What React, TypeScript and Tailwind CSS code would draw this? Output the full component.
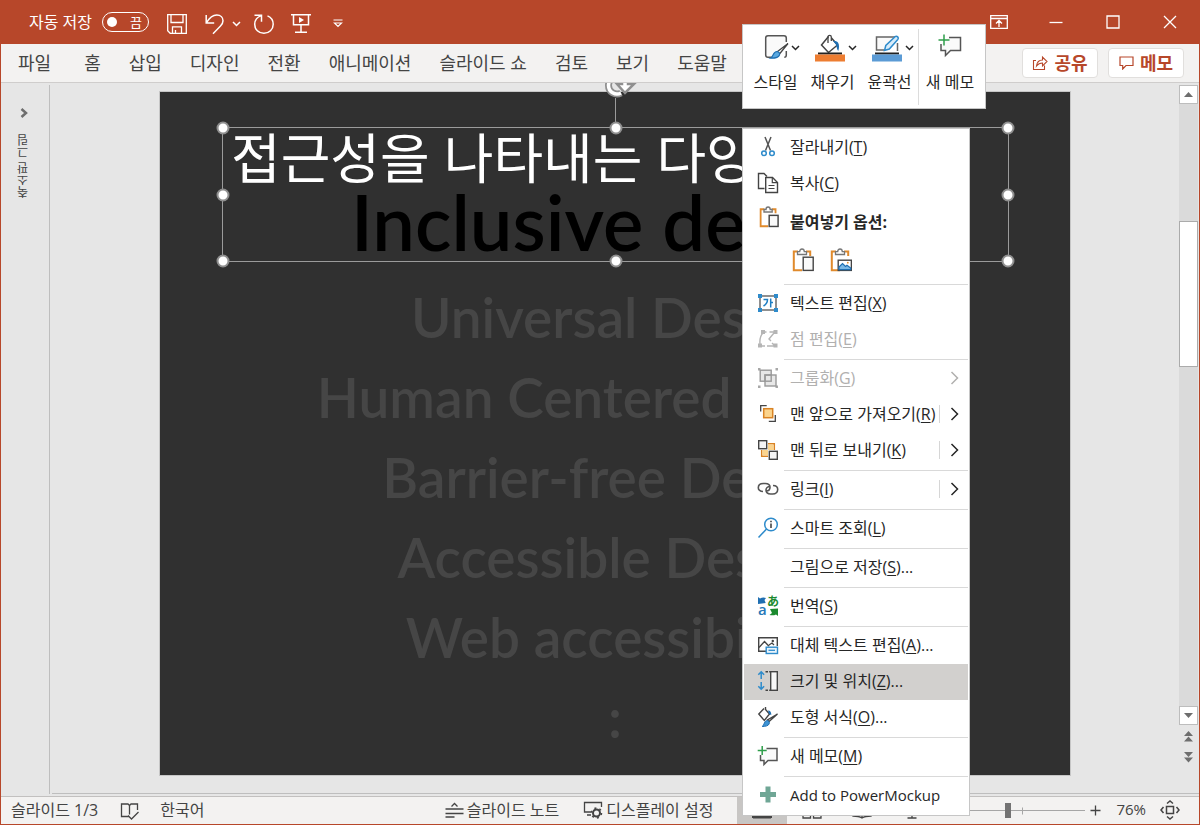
import React from "react";

type IconProps = { className?: string };

const Svg = ({
  w,
  h,
  children,
  className = "",
}: {
  w: number;
  h: number;
  children: React.ReactNode;
  className?: string;
}) => (
  <svg
    width={w}
    height={h}
    viewBox={`0 0 ${w} ${h}`}
    fill="none"
    stroke="currentColor"
    strokeWidth="1.3"
    className={`shrink-0 ${className}`}
    aria-hidden="true"
  >
    {children}
  </svg>
);

const ChevronDown = ({ className }: IconProps) => (
  <Svg w={9} h={6} className={className}>
    <path d="M1 1l3.5 3.5L8 1" strokeWidth="1.5" />
  </Svg>
);

/* ---------- title bar icons ---------- */

const SaveIcon = () => (
  <Svg w={22} h={22}>
    <path d="M1.7 1.7h18.6v18.6H4.2l-2.5-2.5z" />
    <path d="M5 2v7.500h12V2M6.500 20v-6.200h9V20M9.500 20v-3" />
  </Svg>
);

const UndoIcon = () => (
  <Svg w={22} h={22}>
    <path d="M2.200 2v8h8M2.500 9.700C5 5.500 8.500 2 12.800 2c4 0 6.200 2.700 6.200 5.800 0 2.200-1 3.700-2.500 5.200L9 20.700" strokeWidth="1.5" />
  </Svg>
);

const RedoIcon = () => (
  <Svg w={22} h={22}>
    <path d="M1.500 2.200h7v6.500M8.300 2.600C4.500 4 1.700 7 1.700 11.300c0 5.200 4 9 9.200 9s9.300-3.800 9.300-9c0-3.800-2.200-7-5.700-8.400" strokeWidth="1.5" />
  </Svg>
);

const PresentIcon = () => (
  <Svg w={20} h={21}>
    <path d="M0 1.700h20M2.500 2v9.800h15V2M10 12v7M4 19.300h12" strokeWidth="1.5" />
    <path d="M8 4l5 3-5 3z" fill="currentColor" stroke="none" />
  </Svg>
);

const CustomizeIcon = () => (
  <Svg w={10} h={9}>
    <path d="M0.500 1h9M1.500 4l3.500 3.500L8.500 4z" strokeWidth="1.2" />
  </Svg>
);

/* ---------- context menu icons ---------- */

const CutIcon = () => (
  <Svg w={22} h={22}>
    <path d="M8 1l5.500 13.500M14 1L8.500 14.500" stroke="#555" strokeWidth="1.500" />
    <circle cx="7" cy="17.300" r="2.300" stroke="#2e8bcb" strokeWidth="1.500" />
    <circle cx="15" cy="17.300" r="2.300" stroke="#2e8bcb" strokeWidth="1.500" />
  </Svg>
);

const CopyIcon = () => (
  <Svg w={22} h={22}>
    <path d="M7.500 16.500h-6v-15H7l3 3" stroke="#444" strokeWidth="1.400" />
    <path d="M8.700 5.500h6.800l5 5v10H8.700z" fill="#fff" stroke="#444" strokeWidth="1.400" />
    <path d="M15.300 5.500v5.200h5.200M11.500 13.500h6M11.500 16.500h6" stroke="#444" strokeWidth="1.200" />
  </Svg>
);

const PasteIcon = ({ picture = false }: { picture?: boolean }) => (
  <Svg w={22} h={24}>
    <path d="M6 3.500H1.800v18.700H10M14 3.500h4.200V8" stroke="#e08a2c" strokeWidth="2" />
    <path d="M5.500 6.500V3.700h2.200C7.700 2 8.600 1 10 1s2.300 1 2.300 2.700h2.200v2.800z" fill="#fff" stroke="#777" strokeWidth="1.300" />
    {picture ? (
      <>
        <rect x="8.200" y="12.200" width="13.200" height="10.200" fill="#fff" stroke="#444" strokeWidth="1.400" />
        <path d="M9 19l3.500-3.500 3 3 1.500-1.300L20.700 20v1.700H9z" fill="#7ab8e6" stroke="#1f6fb2" strokeWidth="1.200" />
        <circle cx="17.800" cy="14.700" r="0.900" fill="#e08a2c" stroke="none" />
      </>
    ) : (
      <rect x="11.200" y="9.200" width="10" height="13.200" fill="#fafafa" stroke="#444" strokeWidth="1.400" />
    )}
  </Svg>
);

const TextEditIcon = () => (
  <Svg w={22} h={22}>
    <rect x="3" y="4" width="16" height="14" stroke="#555" strokeWidth="1.300" />
    <g fill="#2e8bcb" stroke="none">
      <rect x="1" y="2" width="4" height="4" />
      <rect x="17" y="2" width="4" height="4" />
      <rect x="1" y="16" width="4" height="4" />
      <rect x="17" y="16" width="4" height="4" />
    </g>
    <path d="M6.500 7.500h4c0 3-1.500 5-4 6.500M13.700 6.500v9M13.700 10.500h2.300" stroke="#1f7fc4" strokeWidth="1.500" />
  </Svg>
);

const PointEditIcon = () => (
  <Svg w={22} h={22}>
    <path d="M7 4h2.500M12.500 4h5M17 5l-5 6 2 2M15 15l2.500 2.500M3 16C2.500 11 3.500 7.500 6 5M5 18h3M10 18h7" stroke="#b5b5b5" strokeWidth="1.400" />
    <g fill="#b5b5b5" stroke="none">
      <rect x="4" y="2" width="4" height="4" />
      <rect x="16.500" y="2" width="4" height="4" />
      <rect x="1" y="15.500" width="4" height="4" />
      <rect x="16.500" y="15.500" width="4" height="4" />
    </g>
  </Svg>
);

const GroupIcon = () => (
  <Svg w={22} h={22}>
    <g fill="#a8a8a8" stroke="none">
      <rect x="1" y="1" width="2.500" height="2.500" />
      <rect x="18.500" y="1" width="2.500" height="2.500" />
      <rect x="1" y="18.500" width="2.500" height="2.500" />
      <rect x="18.500" y="18.500" width="2.500" height="2.500" />
    </g>
    <rect x="3.200" y="3.200" width="11" height="11" fill="#e8e8e8" stroke="#999" strokeWidth="1.400" />
    <rect x="8" y="8" width="11" height="11" fill="#e8e8e8" stroke="#999" strokeWidth="1.400" />
    <rect x="8" y="8" width="6.200" height="6.200" stroke="#999" strokeWidth="1.400" />
  </Svg>
);

const BringFrontIcon = () => (
  <Svg w={22} h={22}>
    <rect x="6.700" y="5.700" width="9" height="9" fill="#fbd48d" stroke="#d98324" strokeWidth="1.500" />
    <path d="M3.700 8.500V2.700h6M18.300 12v6.300h-6.500" stroke="#444" strokeWidth="1.300" />
  </Svg>
);

const SendBackIcon = () => (
  <Svg w={22} h={22}>
    <path d="M11 4.700h6.300V11M4.700 11v6.300H11" stroke="#d98324" strokeWidth="1.500" />
    <path d="M11 5.500h5.500V11H11zM5.500 11H11v5.500H5.500z" fill="#fbd48d" stroke="none" />
    <rect x="1.700" y="1.700" width="8" height="8" fill="#f5f5f5" stroke="#444" strokeWidth="1.400" />
    <rect x="12.300" y="12.300" width="8" height="8" fill="#f5f5f5" stroke="#444" strokeWidth="1.400" />
  </Svg>
);

const LinkIcon = () => (
  <Svg w={22} h={22}>
    <path d="M6 13.500c-2.800 0-4.700-1.500-4.700-3.800S3.200 5.500 6.300 5.500h2c3 0 4.700 1.500 4.700 3.700 0 2.300-1.700 3.800-4 3.800" stroke="#555" strokeWidth="1.600" />
    <path d="M16 7.500c2.800 0 4.700 1.600 4.700 4s-1.900 4.500-5 4.500h-2c-3 0-4.700-1.600-4.700-3.900C9 10 10.500 8.500 13 8.500" stroke="#555" strokeWidth="1.600" />
  </Svg>
);

const LookupIcon = () => (
  <Svg w={22} h={22}>
    <circle cx="14" cy="7.500" r="6.300" stroke="#2e8bcb" strokeWidth="1.500" />
    <path d="M9.500 12L1.500 20.500" stroke="#2e8bcb" strokeWidth="1.500" />
    <path d="M14 6.500v4.500M14 3.800v1.500" stroke="#444" strokeWidth="1.600" />
  </Svg>
);

const TranslateIcon = () => (
  <Svg w={22} h={22} className="overflow-visible">
    <path d="M1 2l2 1.500C5 2.300 7 2.200 9 3L7.500 5l1.200 3L1 9z" fill="#1f6fb2" stroke="none" />
    <path d="M21 21l-2-1.500c-2 1-4 1-6.500.5l2.500-2-2-4 8-.5z" fill="#1b8a2f" stroke="none" />
    <text x="1" y="20" fontSize="15" fontWeight="600" fill="#2577b8" stroke="none" fontFamily="Open Sans, sans-serif">a</text>
    <text x="10" y="11" fontSize="12" fontWeight="700" fill="#1b8a2f" stroke="none" fontFamily="Noto Sans CJK JP, sans-serif">あ</text>
  </Svg>
);

const AltTextIcon = () => (
  <Svg w={22} h={22}>
    <path d="M9 17.300H1.700V3.700h18.600V12" stroke="#444" strokeWidth="1.400" />
    <path d="M2 13.500l5.500-6 4.500 4.800M12 11l3-2 2 2" stroke="#444" strokeWidth="1.300" />
    <circle cx="15.800" cy="7" r="1.200" fill="#444" stroke="none" />
    <rect x="9.200" y="13.200" width="11.300" height="6.300" fill="#e9f4fc" stroke="#2e8bcb" strokeWidth="1.400" />
    <path d="M11.500 16.300h6.500" stroke="#2e8bcb" />
  </Svg>
);

const SizeIcon = () => (
  <Svg w={22} h={22}>
    <path d="M4.200 2v7M4.200 12v7M1.300 4.800l2.900-3 2.900 3M1.300 16.200l2.900 3 2.900-3" stroke="#2e8bcb" strokeWidth="1.500" />
    <path d="M8.500 1.700h5M8.500 20.300h5" stroke="#444" strokeWidth="1.400" strokeDasharray="2.500 1.200" />
    <rect x="13.700" y="1.700" width="6.600" height="18.600" fill="#f7f7f7" stroke="#444" strokeWidth="1.400" />
  </Svg>
);

const ShapeFormatIcon = () => (
  <Svg w={22} h={22}>
    <path d="M7 2.500L1.800 8l5.500 6.500L12.500 8 8.500 3.500V1" fill="#fff" stroke="#444" strokeWidth="1.400" />
    <path d="M11 4.500c2.500 0 3.300 1.800 3.300 4.500L12 8z" fill="#1f6fb2" stroke="none" />
    <path d="M20.500 8L12 15.500l-1.500-1.500L20.500 8z" fill="#fff" stroke="#444" strokeWidth="1.300" />
    <path d="M10.500 14.500c1.500.5 2.200 1.800 1.700 3.300-.7 2-3.700 2.700-7 2.700 2.300-1.500 1.800-6 5.300-6z" fill="#3d93d4" stroke="#1f6fb2" strokeWidth="1" />
  </Svg>
);

const NewCommentIcon = () => (
  <Svg w={24} h={22}>
    <path d="M9.500 3.500h10.500v12h-9L7 19.500v-4H3.500V10" stroke="#555" strokeWidth="1.500" fill="#fafafa" />
    <path d="M5.200 1v9M0.700 5.500h9" stroke="#2f9e4b" strokeWidth="1.500" />
  </Svg>
);

const LargeCommentIcon = () => (
  <Svg w={24} h={24}>
    <path d="M11 3.500h11.500v13h-10L7.500 21.500v-5H3V10" stroke="#555" strokeWidth="1.500" fill="#fafafa" />
    <path d="M6 0.500v11M0.500 6h11" stroke="#2f9e4b" strokeWidth="1.500" />
  </Svg>
);

const PlusBlockIcon = () => (
  <Svg w={22} h={22}>
    <path d="M8.500 2.500h5v5.500h5.500v5h-5.500v5.500h-5V13H3V8h5.500z" fill="#6fa695" stroke="none" />
  </Svg>
);

/* ---------- mini toolbar icons ---------- */

const StyleIcon = () => (
  <Svg w={26} h={28}>
    <path d="M10 23.300H5c-1.500 0-2.300-.8-2.300-2.300V4c0-1.500.8-2.300 2.300-2.300h16c1.500 0 2.300.8 2.300 2.300v4M23.300 17v4c0 1.500-.5 2.300-2 2.300" stroke="#555" strokeWidth="1.500" fill="#fafafa" />
    <path d="M25 9.500L16.500 20l-2.300-2.200z" fill="#fff" stroke="#444" strokeWidth="1.300" />
    <path d="M14 17.500c2 .3 3 1.700 2.500 3.500-.8 2.500-4.500 3.300-9 3.200 3-1.700 2.500-6.700 6.500-6.700z" fill="#5aa9e0" stroke="#1f6fb2" strokeWidth="1.200" />
  </Svg>
);

const FillIcon = () => (
  <Svg w={32} h={28}>
    <path d="M14.500 2.500L7.500 11l7 7.500 9-7.500-6-7" fill="#fff" stroke="#444" strokeWidth="1.500" />
    <path d="M14 9V3c0-2.300 3.300-2.300 3.300 0v4" stroke="#444" strokeWidth="1.300" />
    <path d="M19 7c3-.3 6 .5 6 5.500 0 2-.3 3-.8 4.500-1.500-1.500-1.500-5-2.200-6.500z" fill="#1f6fb2" stroke="none" />
    <rect x="4" y="18.500" width="24" height="2" fill="#222" stroke="none" />
    <rect x="1" y="20.500" width="30" height="7" fill="#ed7d31" stroke="none" />
  </Svg>
);

const OutlineIcon = () => (
  <Svg w={32} h={28}>
    <path d="M13 16H5.500V3H25M26.500 9v8" stroke="#666" strokeWidth="1.500" fill="#fafafa" />
    <path d="M13.500 16.500l1.300-5L24 2.700c2-1.500 4.300 1 2.800 2.800L18.300 15z" fill="#d8ecfa" stroke="#2e8bcb" strokeWidth="1.500" />
    <rect x="4" y="18.500" width="24" height="2" fill="#222" stroke="none" />
    <rect x="1" y="20.500" width="30" height="7" fill="#5b9bd5" stroke="none" />
  </Svg>
);

/* ---------- data ---------- */

const tabs = ["홈", "삽입", "디자인", "전환", "애니메이션", "슬라이드 쇼", "검토", "보기", "도움말"];

const slideLines = [
  "Universal Design",
  "Human Centered Design",
  "Barrier-free Design",
  "Accessible Design",
  "Web accessibility",
  ":",
];

const handles = [
  "left-0 top-0",
  "left-1/2 top-0",
  "left-full top-0",
  "left-0 top-1/2",
  "left-full top-1/2",
  "left-0 top-full",
  "left-1/2 top-full",
  "left-full top-full",
];

type Item = {
  label: string;
  accel?: string;
  suffix?: string;
  icon?: React.ReactNode;
  disabled?: boolean;
  active?: boolean;
  arrow?: "plain" | "split";
};

const topItems: Item[] = [
  { label: "잘라내기", accel: "T", icon: <CutIcon /> },
  { label: "복사", accel: "C", icon: <CopyIcon /> },
];

const itemGroups: Item[][] = [
  [
    { label: "텍스트 편집", accel: "X", icon: <TextEditIcon /> },
    { label: "점 편집", accel: "E", icon: <PointEditIcon />, disabled: true },
  ],
  [
    { label: "그룹화", accel: "G", icon: <GroupIcon />, disabled: true, arrow: "plain" },
    { label: "맨 앞으로 가져오기", accel: "R", icon: <BringFrontIcon />, arrow: "split" },
    { label: "맨 뒤로 보내기", accel: "K", icon: <SendBackIcon />, arrow: "split" },
  ],
  [{ label: "링크", accel: "I", icon: <LinkIcon />, arrow: "split" }],
  [{ label: "스마트 조회", accel: "L", icon: <LookupIcon /> }],
  [{ label: "그림으로 저장", accel: "S", suffix: "..." }],
  [{ label: "번역", accel: "S", icon: <TranslateIcon /> }],
  [
    { label: "대체 텍스트 편집", accel: "A", suffix: "...", icon: <AltTextIcon /> },
    { label: "크기 및 위치", accel: "Z", suffix: "...", icon: <SizeIcon />, active: true },
    { label: "도형 서식", accel: "O", suffix: "...", icon: <ShapeFormatIcon /> },
  ],
  [{ label: "새 메모", accel: "M", icon: <NewCommentIcon /> }],
  [{ label: "Add to PowerMockup", icon: <PlusBlockIcon /> }],
];

/* ---------- parts ---------- */

function MenuItem({ item }: { item: Item }) {
  return (
    <button
      type="button"
      role="menuitem"
      disabled={item.disabled}
      className={`flex h-9 w-full items-center pb-0.5 pl-[13px] text-left ${
        item.active ? "bg-[#d2d0ce]" : ""
      } ${item.disabled ? "text-[#b1b0af]" : "text-[#262626]"}`}
    >
      <span className="flex w-[33px] shrink-0 justify-start">{item.icon}</span>
      {item.accel ? (
        <span className="flex flex-1 whitespace-nowrap">
          <span>{item.label}(</span>
          <u className="underline underline-offset-2">{item.accel}</u>
          <span>){item.suffix}</span>
        </span>
      ) : (
        <span className="flex-1 whitespace-nowrap text-[15px]">{item.label}</span>
      )}
      {item.arrow && (
        <span
          className={`flex h-[18px] w-[29px] shrink-0 items-center justify-center border-l ${
            item.arrow === "split" ? "border-[#d6d6d6]" : "border-transparent"
          }`}
        >
          <Svg w={9} h={14}>
            <path d="M1.500 1l6 6-6 6" strokeWidth="1.500" />
          </Svg>
        </span>
      )}
    </button>
  );
}

const Separator = () => (
  <div role="separator" className="py-px pl-10">
    <div className="h-px bg-[#d9d9d9]" />
  </div>
);

function ContextMenu() {
  return (
    <div
      role="menu"
      className="absolute left-[741px] top-[127px] z-20 w-[228px] border border-[#c6c6c6] bg-white p-px text-base leading-none"
    >
      {topItems.map((item) => (
        <MenuItem key={item.label} item={item} />
      ))}
      <div className="flex h-[38px] items-start pl-[13px] pt-1 font-bold text-[#262626]">
        <span className="flex w-[33px] shrink-0 pl-0.5">
          <svg width="20" height="22" viewBox="0 0 22 24" fill="none" aria-hidden="true">
            <path d="M6 3.500H1.800v18.700H10M14 3.500h4.200V8" stroke="#e08a2c" strokeWidth="2" />
            <path d="M5.500 6.500V3.700h2.200C7.700 2 8.600 1 10 1s2.300 1 2.300 2.700h2.200v2.800z" fill="#fff" stroke="#777" strokeWidth="1.500" />
            <rect x="11.200" y="10.200" width="9.800" height="12.200" fill="#fafafa" stroke="#444" strokeWidth="1.600" />
          </svg>
        </span>
        <span className="pt-2">붙여넣기 옵션:</span>
      </div>
      <div className="flex h-[43px] items-start gap-4 pl-12 pt-2">
        <button type="button" aria-label="대상 테마 사용">
          <PasteIcon />
        </button>
        <button type="button" aria-label="그림">
          <PasteIcon picture />
        </button>
      </div>
      {itemGroups.map((group, i) => (
        <React.Fragment key={i}>
          <Separator />
          {group.map((item) => (
            <MenuItem key={item.label} item={item} />
          ))}
        </React.Fragment>
      ))}
    </div>
  );
}

function MiniToolbar() {
  const tools = [
    { label: "스타일", icon: <StyleIcon /> },
    { label: "채우기", icon: <FillIcon /> },
    { label: "윤곽선", icon: <OutlineIcon /> },
  ];
  return (
    <div className="absolute left-[741px] top-[23px] z-20 flex w-[244px] border border-[#c6c6c6] bg-white px-1 pb-[3px] pt-1 text-base leading-none text-[#262626]">
      {tools.map((t) => (
        <button key={t.label} type="button" className="flex h-[76px] w-[57px] flex-col items-center pt-[5px]">
          <span className="mr-1 flex h-7 items-start justify-end gap-0.5 self-end">
            {t.icon}
            <ChevronDown className="mt-[11px]" />
          </span>
          <span className="mt-3 whitespace-nowrap">{t.label}</span>
        </button>
      ))}
      <button type="button" className="flex h-[76px] grow flex-col items-center border-l border-[#dcdcdc] pt-[5px]">
        <span className="h-7">
          <LargeCommentIcon />
        </span>
        <span className="mt-3 whitespace-nowrap">새 메모</span>
      </button>
    </div>
  );
}

function TitleBar() {
  return (
    <header className="flex h-[43px] items-center bg-[#b7472a] pb-px pl-7 text-white">
      <label className="flex items-center gap-2.5 whitespace-nowrap text-base leading-none">
        <span>자동 저장</span>
        <input type="checkbox" role="switch" className="peer sr-only" />
        <span className="flex h-5 w-[47px] items-center justify-between rounded-full border border-white pl-1 pr-1.5 text-[13px]">
          <span className="size-2.5 rounded-full bg-white" />끔
        </span>
      </label>
      <div className="flex items-center pl-[17px] pt-[3px]">
        <button type="button" aria-label="저장">
          <SaveIcon />
        </button>
        <button type="button" aria-label="실행 취소" className="ml-4">
          <UndoIcon />
        </button>
        <button type="button" aria-label="실행 취소 목록" className="ml-1.5">
          <ChevronDown />
        </button>
        <button type="button" aria-label="다시 실행" className="ml-3">
          <RedoIcon />
        </button>
        <button type="button" aria-label="처음부터 시작" className="ml-4">
          <PresentIcon />
        </button>
        <button type="button" aria-label="빠른 실행 도구 모음 사용자 지정" className="ml-[22px]">
          <CustomizeIcon />
        </button>
      </div>
      <div className="ml-auto flex pr-px">
        <button type="button" aria-label="리본 표시 옵션" className="flex h-9 w-[57px] items-center justify-center">
          <Svg w={18} h={14}>
            <path d="M0.700 0.700h16.600v12.600H0.700zM0.700 3.500h16.600M9 12V6M6 8.500l3-3 3 3" />
          </Svg>
        </button>
        <button type="button" aria-label="최소화" className="flex h-9 w-[57px] items-center justify-center">
          <Svg w={14} h={14}>
            <path d="M0.500 7.500h13" />
          </Svg>
        </button>
        <button type="button" aria-label="최대화" className="flex h-9 w-[57px] items-center justify-center">
          <Svg w={14} h={14}>
            <path d="M1 1h12v12H1z" />
          </Svg>
        </button>
        <button type="button" aria-label="닫기" className="flex h-9 w-[57px] items-center justify-center">
          <Svg w={14} h={14}>
            <path d="M1 1l12 12M13 1L1 13" />
          </Svg>
        </button>
      </div>
    </header>
  );
}

function TabBar() {
  return (
    <nav className="flex h-[39px] items-center border-b border-[#cfcdcc] bg-[#f3f2f1] pl-px pr-[15px] text-lg leading-none text-[#444]">
      <button type="button" className="whitespace-nowrap px-4">
        파일
      </button>
      <div className="flex pl-[3px]">
        {tabs.map((t) => (
          <button key={t} type="button" className="whitespace-nowrap px-3.5">
            {t}
          </button>
        ))}
      </div>
      <div className="ml-auto flex gap-2.5 font-bold text-[#b7472a]">
        <button type="button" className="flex h-[30px] w-[76px] items-center justify-center gap-1.5 rounded-sm border border-[#e1dfdd] bg-white">
          <Svg w={16} h={16}>
            <path d="M4 5.500H1.500v9h11v-4M4.500 11C5 7 7.500 5 10.500 5V2l4.500 4.500L10.500 11V8C8 8 6 9 4.500 11z" strokeWidth="1.100" />
          </Svg>
          공유
        </button>
        <button type="button" className="flex h-[30px] w-[76px] items-center justify-center gap-1.5 rounded-sm border border-[#e1dfdd] bg-white">
          <Svg w={15} h={14}>
            <path d="M1 1h13v8.500H7L3.700 13V9.500H1z" strokeWidth="1.200" />
          </Svg>
          메모
        </button>
      </div>
    </nav>
  );
}

function Slide() {
  return (
    <div className="mb-[17px] ml-[109px] mr-[108px] mt-2 flex-1 border border-[#c6c6c6] bg-[#303030] pt-[35px]">
      <div className="relative ml-[62px] mr-[61px] h-[135px] border border-[#9b9b9b]">
        <p className="whitespace-nowrap pl-2 text-[54px] leading-[60px] text-white">접근성을 나타내는 다양한 용어</p>
        <p className="whitespace-nowrap text-center font-['Lato',sans-serif] text-[76px] font-semibold leading-[68px] text-black">
          Inclusive design
        </p>
        <svg className="absolute -top-14 left-1/2 -ml-[17px]" width="44" height="56" viewBox="0 0 44 56" fill="none" aria-hidden="true">
          <path d="M16.500 26v30" stroke="#9b9b9b" />
          <path d="M22 6A8.500 8.500 0 1 0 22 21" stroke="#8f8f8f" strokeWidth="7" />
          <path d="M22 6A8.500 8.500 0 1 0 22 21" stroke="#fff" strokeWidth="3.500" />
          <path d="M18 12h5V4h6v8h6l-9 9z" fill="#fff" stroke="#8f8f8f" strokeWidth="2.500" />
        </svg>
        {handles.map((pos) => (
          <span
            key={pos}
            className={`absolute size-[13px] -translate-x-1/2 -translate-y-1/2 rounded-full border-2 border-[#8f8f8f] bg-white ${pos}`}
          />
        ))}
      </div>
      <div className="mt-[15px] text-center font-['Lato',sans-serif] text-[55px] font-semibold leading-[80px] text-[#464646]">
        {slideLines.map((l) => (
          <p key={l} className="whitespace-nowrap">
            {l}
          </p>
        ))}
      </div>
    </div>
  );
}

const scrollBtn = "flex h-[19px] w-full items-center justify-center border border-[#bdbdbd] bg-white";

function ScrollBar() {
  return (
    <div className="mt-0.5 flex w-[19px] shrink-0 flex-col text-[#6e6e6e]">
      <button type="button" aria-label="위로" className={scrollBtn}>
        <Svg w={9} h={5}>
          <path d="M0 5l4.500-5L9 5z" fill="currentColor" stroke="none" />
        </Svg>
      </button>
      <div className="flex flex-1 flex-col bg-[#dadada]">
        <div className="grow-[117]" />
        <div className="h-[146px] border border-[#ababab] bg-white" />
        <div className="grow-[340]" />
      </div>
      <button type="button" aria-label="아래로" className={scrollBtn}>
        <Svg w={9} h={5}>
          <path d="M0 0l4.500 5L9 0z" fill="currentColor" stroke="none" />
        </Svg>
      </button>
      <button type="button" aria-label="이전 슬라이드" className="mt-1.5 flex justify-center">
        <Svg w={9} h={11}>
          <path d="M0 5l4.500-5L9 5zM0 10.500l4.500-5 4.500 5z" fill="currentColor" stroke="none" />
        </Svg>
      </button>
      <button type="button" aria-label="다음 슬라이드" className="mb-[30px] mt-2.5 flex justify-center">
        <Svg w={9} h={11}>
          <path d="M0 0l4.500 5L9 0zM0 5.500l4.500 5 4.500-5z" fill="currentColor" stroke="none" />
        </Svg>
      </button>
    </div>
  );
}

function StatusBar() {
  return (
    <footer className="flex h-7 items-center border-t border-[#c2c0bf] bg-[#f3f2f1] text-base leading-none text-[#444]">
      <span className="whitespace-nowrap pb-0.5 pl-2.5">슬라이드 1/3</span>
      <button type="button" aria-label="맞춤법 검사" className="ml-[22px]">
        <Svg w={20} h={18}>
          <path d="M9 14.500H1.500V2H8l1.500 1.500v9M9.500 3.500L11 2h6.500v6M8 13.500l3.500 3.500 7-7" />
        </Svg>
      </button>
      <button type="button" className="ml-5 whitespace-nowrap pb-0.5">
        한국어
      </button>
      <div className="ml-auto flex h-full items-center">
        <button type="button" className="flex items-center gap-[3px] whitespace-nowrap pb-0.5">
          <Svg w={19} h={16}>
            <path d="M6.500 4.500l3-3 3 3M0.500 7h18M0.500 11.500h18M0.500 15h9" />
          </Svg>
          슬라이드 노트
        </button>
        <button type="button" className="ml-6 flex items-center gap-[3px] whitespace-nowrap pb-0.5">
          <Svg w={20} h={18}>
            <path d="M8 11H1.500V1.500h17V6M4 14h4" />
            <circle cx="13.500" cy="12" r="3.500" strokeWidth="2" />
            <circle cx="13.500" cy="12" r="5" strokeWidth="1.500" strokeDasharray="2 3.200" />
          </Svg>
          디스플레이 설정
        </button>
        <div className="ml-6 flex h-full items-center">
          {[0, 1, 2, 3].map((v) => (
            <button
              key={v}
              type="button"
              aria-label={["기본", "여러 슬라이드", "읽기용 보기", "슬라이드 쇼"][v]}
              className={`flex h-full w-[50px] items-center justify-center ${v === 0 ? "bg-[#c8c6c4]" : ""}`}
            >
              <Svg w={20} h={18}>
                {v === 0 && <path d="M1 2h18v13H1zM1 15.500h18" strokeWidth="2" />}
                {v === 1 && <path d="M1 2h7.500v5H1zM11.500 2H19v5h-7.500zM1 10h7.500v6H1zM11.500 10H19v6h-7.500z" />}
                {v === 2 && <path d="M10 4C7 2 4 2 1 2v12c3 0 6 0 9 2 3-2 6-2 9-2V2c-3 0-6 0-9 2zv12" />}
                {v === 3 && <path d="M1 2h18M3 2v9h14V2M10 11v5M5.500 16h9" />}
              </Svg>
            </button>
          ))}
        </div>
        <button type="button" aria-label="축소" className="ml-1.5 w-3">
          <Svg w={11} h={11}>
            <path d="M0.500 5.500h10" />
          </Svg>
        </button>
        <div className="relative ml-1 flex h-full w-[126px] items-center">
          <span className="absolute left-1/2 top-1/2 h-[7px] w-px -translate-y-1/2 bg-[#a6a6a6]" />
          <input
            type="range"
            min={10}
            max={190}
            defaultValue={78}
            aria-label="확대/축소"
            className="relative h-4 w-full appearance-none bg-transparent [&::-webkit-slider-runnable-track]:h-px [&::-webkit-slider-runnable-track]:bg-[#a6a6a6] [&::-webkit-slider-thumb]:-mt-[7px] [&::-webkit-slider-thumb]:h-[15px] [&::-webkit-slider-thumb]:w-1.5 [&::-webkit-slider-thumb]:appearance-none [&::-webkit-slider-thumb]:bg-[#737373]"
          />
        </div>
        <button type="button" aria-label="확대" className="ml-[5px]">
          <Svg w={11} h={11}>
            <path d="M0.500 5.500h10M5.500 0.500v10" />
          </Svg>
        </button>
        <button type="button" className="ml-[15px] pb-0.5 text-[15px]">
          76%
        </button>
        <button type="button" aria-label="창에 맞춤" className="ml-3.5 mr-[19px] pb-0.5">
          <Svg w={20} h={20}>
            <path d="M6.500 6.500h7v7h-7zM7 3.500l3-2.500 3 2.500M7 16.500l3 2.500 3-2.500M3.500 7L1 10l2.500 3M16.500 7l2.500 3-2.500 3" strokeWidth="1.500" />
          </Svg>
        </button>
      </div>
    </footer>
  );
}

export default function App() {
  return (
    <div className="relative flex min-h-screen flex-col border border-[#b7472a] bg-[#e6e6e6] font-['Open_Sans','Noto_Sans_CJK_KR',sans-serif] font-normal">
      <TitleBar />
      <TabBar />
      <main className="flex flex-1 overflow-hidden">
        <aside className="mb-0.5 mt-0.5 flex w-[49px] shrink-0 flex-col items-center border-r border-[#bebebe] pr-0.5 pt-[23px] text-[#444]">
          <button type="button" aria-label="축소판 창 확장">
            <Svg w={8} h={10}>
              <path d="M1.500 1l4.500 4-4.500 4" stroke="#6e6e6e" strokeWidth="2.500" />
            </Svg>
          </button>
          <span className="mt-4 rotate-180 whitespace-nowrap text-[12px] leading-none [writing-mode:vertical-rl]">
            축소판 그림
          </span>
        </aside>
        <div className="mb-0.5 ml-0.5 flex flex-1 border-b border-[#bebebe] pr-px">
          <div className="-ml-0.5 flex flex-1 flex-col">
            <Slide />
          </div>
          <ScrollBar />
        </div>
      </main>
      <StatusBar />
      <MiniToolbar />
      <ContextMenu />
    </div>
  );
}
